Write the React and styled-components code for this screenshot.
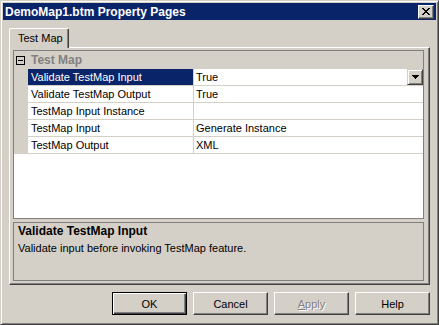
import React from 'react'
import styled, { createGlobalStyle } from 'styled-components'

const GlobalStyle = createGlobalStyle`
  html, body {
    margin: 0;
    padding: 0;
    background: #d4d0c8;
  }
  body {
    font-family: "Liberation Sans", Arial, sans-serif;
    font-size: 11px;
    color: #000;
  }
  * { box-sizing: border-box; }
`

const Window = styled.div`
  width: 439px;
  height: 325px;
  background: #d4d0c8;
  border: 1px solid;
  border-color: #d4d0c8 #404040 #404040 #d4d0c8;
  box-shadow: inset 1px 1px #fff, inset -1px -1px #808080;
  padding: 2px;
  display: flex;
  flex-direction: column;
`

const TitleBar = styled.div`
  height: 17px;
  background: #0a246a;
  display: flex;
  align-items: center;
  padding: 0 2px 0 2px;
`

const Title = styled.div`
  color: #fff;
  font-weight: bold;
  font-size: 12px;
  white-space: nowrap;
`

const CloseButton = styled.div`
  margin-left: auto;
  width: 16px;
  height: 14px;
  background: #d4d0c8;
  border: 1px solid;
  border-color: #fff #404040 #404040 #fff;
  box-shadow: inset -1px -1px #808080;
  display: flex;
  align-items: center;
  justify-content: center;
  padding: 0 0 1px 0;
`

const Body = styled.div`
  flex: 1;
  display: flex;
  flex-direction: column;
  padding: 8px 6px 7px 6px;
`

const TabStrip = styled.div`
  display: flex;
  height: 19px;
  position: relative;
  z-index: 1;
`

const Tab = styled.div`
  width: 60px;
  height: 20px;
  background: #d4d0c8;
  border-top: 1px solid #fff;
  border-left: 1px solid #fff;
  border-right: 1px solid #404040;
  border-radius: 2px 2px 0 0;
  box-shadow: inset -1px 0 #808080;
  padding: 3px 0 0 8px;
  white-space: nowrap;
`

const TabPage = styled.div`
  height: 238px;
  border: 1px solid;
  border-color: #fff #404040 #404040 #fff;
  box-shadow: inset -1px -1px #808080;
  padding: 2px 5px 3px 3px;
  display: flex;
  flex-direction: column;
  gap: 3px;
`

const Grid = styled.div`
  flex: 1;
  background: #fff;
  border: 1px solid #808080;
  display: flex;
  flex-direction: column;
`

const CategoryRow = styled.div`
  height: 18px;
  background: #d4d0c8;
  display: flex;
  align-items: center;
`

const ExpandBox = styled.div`
  width: 9px;
  height: 9px;
  margin: 0 6px 0 2px;
  border: 1px solid #000;
  display: flex;
  align-items: center;
  justify-content: center;
  &::after {
    content: '';
    width: 5px;
    height: 1px;
    background: #000;
  }
`

const CategoryLabel = styled.div`
  font-weight: bold;
  font-size: 12px;
  color: #808080;
`

const Row = styled.div`
  display: grid;
  grid-template-columns: 14px 165px 1fr;
  height: 17px;
`

const Gutter = styled.div`
  background: #d4d0c8;
`

const NameCell = styled.div`
  border-bottom: 1px solid #d4d0c8;
  padding-left: 3px;
  line-height: 16px;
  white-space: nowrap;
  background: ${p => (p.$selected ? '#0a246a' : '#fff')};
  color: ${p => (p.$selected ? '#fff' : '#000')};
`

const ValueCell = styled.div`
  border-bottom: 1px solid #d4d0c8;
  border-left: 1px solid #d4d0c8;
  padding-left: 2px;
  display: flex;
  align-items: center;
  white-space: nowrap;
`

const DropButton = styled.div`
  margin-left: auto;
  width: 16px;
  height: 16px;
  background: #d4d0c8;
  border: 1px solid;
  border-color: #d4d0c8 #404040 #404040 #d4d0c8;
  box-shadow: inset 1px 1px #fff, inset -1px -1px #808080;
  display: flex;
  align-items: center;
  justify-content: center;
`

const Description = styled.div`
  height: 59px;
  border: 1px solid #808080;
  padding: 1px 4px;
`

const DescTitle = styled.div`
  font-weight: bold;
  font-size: 12px;
  line-height: 15px;
`

const DescText = styled.div`
  margin-top: 1px;
  line-height: 16px;
`

const ButtonRow = styled.div`
  display: flex;
  justify-content: flex-end;
  gap: 6px;
  margin-top: 7px;
`

const Button = styled.div`
  width: 75px;
  height: 23px;
  display: flex;
  align-items: center;
  justify-content: center;
  background: #d4d0c8;
  border: 1px solid;
  border-color: ${p => (p.$default ? '#000' : '#fff #404040 #404040 #fff')};
  box-shadow: ${p =>
    p.$default
      ? 'inset 1px 1px #fff, inset -1px -1px #404040, inset -2px -2px #808080'
      : 'inset -1px -1px #808080'};
  color: ${p => (p.$disabled ? '#808080' : '#000')};
  text-shadow: ${p => (p.$disabled ? '1px 1px 0 #fff' : 'none')};
`

const pixels = (rows) =>
  rows.flatMap((line, y) =>
    line.split('').map((c, x) =>
      c === '#' ? <rect key={`${x}-${y}`} x={x} y={y} width="1" height="1" /> : null
    )
  )

const CloseGlyph = () => (
  <svg width="8" height="7" viewBox="0 0 8 7" shapeRendering="crispEdges" fill="#000">
    {pixels(['##....##', '.##..##.', '..####..', '...##...', '..####..', '.##..##.', '##....##'])}
  </svg>
)

const ArrowGlyph = () => (
  <svg width="7" height="4" viewBox="0 0 7 4" shapeRendering="crispEdges" fill="#000">
    {pixels(['#######', '.#####.', '..###..', '...#...'])}
  </svg>
)

const properties = [
  { name: 'Validate TestMap Input', value: 'True', selected: true },
  { name: 'Validate TestMap Output', value: 'True' },
  { name: 'TestMap Input Instance', value: '' },
  { name: 'TestMap Input', value: 'Generate Instance' },
  { name: 'TestMap Output', value: 'XML' },
]

export default function App() {
  return (
    <>
      <GlobalStyle />
      <Window>
        <TitleBar>
          <Title>DemoMap1.btm Property Pages</Title>
          <CloseButton><CloseGlyph /></CloseButton>
        </TitleBar>
        <Body>
          <TabStrip>
            <Tab>Test Map</Tab>
          </TabStrip>
          <TabPage>
            <Grid>
              <CategoryRow>
                <ExpandBox />
                <CategoryLabel>Test Map</CategoryLabel>
              </CategoryRow>
              {properties.map(p => (
                <Row key={p.name}>
                  <Gutter />
                  <NameCell $selected={p.selected}>{p.name}</NameCell>
                  <ValueCell>
                    {p.value}
                    {p.selected && <DropButton><ArrowGlyph /></DropButton>}
                  </ValueCell>
                </Row>
              ))}
            </Grid>
            <Description>
              <DescTitle>Validate TestMap Input</DescTitle>
              <DescText>Validate input before invoking TestMap feature.</DescText>
            </Description>
          </TabPage>
          <ButtonRow>
            <Button $default>OK</Button>
            <Button>Cancel</Button>
            <Button $disabled><span><u>A</u>pply</span></Button>
            <Button>Help</Button>
          </ButtonRow>
        </Body>
      </Window>
    </>
  )
}
